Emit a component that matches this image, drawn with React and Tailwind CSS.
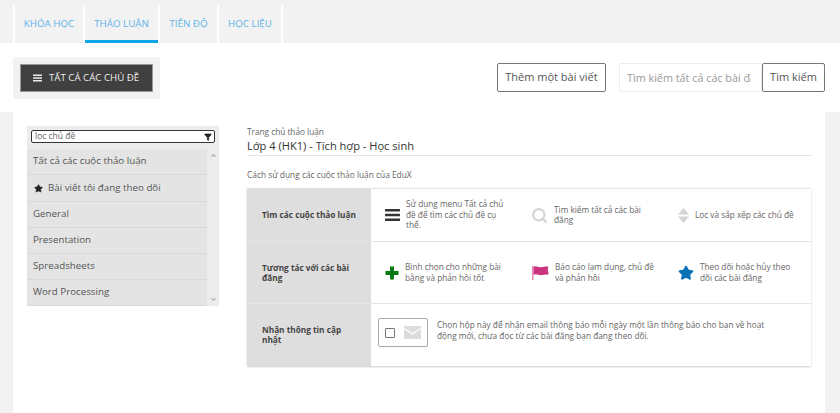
import React from 'react';
import { Star, Filter, Search, ChevronUp, ChevronDown } from 'lucide-react';

const topics = ['General', 'Presentation', 'Spreadsheets', 'Word Processing'];

function Tab({ label, active, width }) {
  return (
    <div className={`flex h-[38px] items-center justify-center border-l-2 border-white text-[9.75px] text-[#5fb3ea] ${width} ${active ? 'shadow-[inset_0_-3px_0_#0ea5e9]' : ''}`}>
      {label}
    </div>
  );
}

function BarsIcon({ width, height, color }) {
  return (
    <svg width={width} height={height} viewBox="0 0 15 12" className="shrink-0" fill={color}>
      <rect x="0" y="0" width="15" height="2.500" rx="0.5" />
      <rect x="0" y="4.700" width="15" height="2.500" rx="0.5" />
      <rect x="0" y="9.400" width="15" height="2.500" rx="0.5" />
    </svg>
  );
}

function SortIcon() {
  return (
    <svg width="11" height="15" viewBox="0 0 11 15" className="shrink-0">
      <path d="M5.500 0 11 6.500H0z M0 8.500h11L5.500 15z" fill="#d4d4d4" />
    </svg>
  );
}

function PlusIcon() {
  return (
    <svg width="14" height="14" viewBox="0 0 14 14" className="shrink-0">
      <path d="M5 .5h4V5h4.500v4H9v4.500H5V9H.5V5H5z" fill="#0a7a12" />
    </svg>
  );
}

function FlagIcon() {
  return (
    <svg width="17" height="15" viewBox="0 0 18 16" className="shrink-0">
      <path d="M0 1h1.400v15H0z" fill="#e879a8" />
      <path d="M1.500 2c3-1.600 5 .6 8 .4 3-.1 5-.9 8-.7-.8 2-1 3.500-.3 5.500.3 1 .3 2 .3 3-3-.3-5 .6-8 .6s-5-1.800-8-.3z" fill="#c9337f" />
    </svg>
  );
}

function MailIcon() {
  return (
    <svg width="17" height="13" viewBox="0 0 17 13" className="shrink-0">
      <rect width="17" height="13" rx="1" fill="#dcdcdc" />
      <path d="M.5 2.500 8.500 8l8-5.500" fill="none" stroke="#fff" strokeWidth="1.200" />
    </svg>
  );
}

function HelpItem({ icon, children, className }) {
  return (
    <div className={`flex items-center ${className}`}>
      {icon}
      <p className="text-[8.25px] leading-[10.5px] text-[#666]">{children}</p>
    </div>
  );
}

function RowLabel({ children }) {
  return (
    <div className="flex w-[124px] shrink-0 items-center bg-[#dedede] pl-[15px] text-[8.25px] font-bold leading-[10px] text-[#444]">
      <span className="block w-[95px]">{children}</span>
    </div>
  );
}

export default function App() {
  return (
    <div className="h-[413px] w-[840px] overflow-hidden bg-[#f2f2f2] font-['Open_Sans',sans-serif]">
      {/* tabs */}
      <div className="flex h-[43px] items-end pl-[13px]">
        <Tab label="KHÓA HỌC" width="w-[70px]" />
        <Tab label="THẢO LUẬN" active width="w-[75px]" />
        <Tab label="TIẾN ĐỘ" width="w-[59px]" />
        <div className="flex h-[38px] w-[66px] items-center justify-center border-x-2 border-white text-[9.75px] text-[#5fb3ea]">HỌC LIỆU</div>
      </div>

      {/* toolbar */}
      <div className="flex h-[69px] items-start bg-white pl-[13px] pr-[15px] pt-[14px]">
        <div className="bg-[#f2f2f2] px-[7px] py-[7px]">
          <button className="flex h-[28px] w-[133px] items-center gap-[7px] border border-[#999] bg-[#404040] pl-[12px] text-[9.700px] whitespace-nowrap text-[#eee]">
            <BarsIcon width={9} height={8} color="#eee" />
            TẤT CẢ CÁC CHỦ ĐỀ
          </button>
        </div>
        <div className="ml-auto mt-[6px] flex items-center">
          <button className="flex h-[29px] w-[109px] items-center justify-center rounded-[2px] border border-[#777] bg-white text-[11px] text-[#555]">Thêm một bài viết</button>
          <input
            readOnly
            placeholder="Tìm kiếm tất cả các bài đăng"
            className="ml-[13px] h-[29px] w-[143px] rounded-l-[2px] border border-[#eee] bg-white pl-[7px] pr-[10px] text-[10.800px] outline-none placeholder:text-[#999]"
          />
          <button className="flex h-[29px] w-[63px] items-center justify-center rounded-[2px] border border-[#777] bg-white text-[11px] text-[#555]">Tìm kiếm</button>
        </div>
      </div>

      {/* main */}
      <div className="mx-[13px] flex h-[301px] w-[812px] items-start bg-white pl-[14px] pt-[14px]">
        {/* topic sidebar */}
        <div className="w-[192px] shrink-0 bg-[#ececec]">
          <div className="px-[4px] pt-[4px] pb-[6px]">
            <div className="flex h-[13px] items-center justify-between rounded-[2px] border border-[#333] bg-white pl-[3px] pr-[2px] text-[8.500px] text-[#666]">
              lọc chủ đề
              <Filter size={8} fill="#222" stroke="#222" />
            </div>
          </div>
          <div className="flex">
            <div className="w-[180px]">
              <div className="flex h-[26px] items-center border-b border-[#d8d8d8] bg-[#e4e4e4] pl-[6px] text-[9.75px] text-[#555]">Tất cả các cuộc thảo luận</div>
              <div className="flex h-[27px] items-center gap-[5px] border-b border-[#d8d8d8] bg-[#e4e4e4] pl-[7px] text-[9.75px] text-[#555]">
                <Star size={9} fill="#222" stroke="#222" />
                Bài viết tôi đang theo dõi
              </div>
              {topics.map((t) => (
                <div key={t} className="flex h-[26px] items-center border-b border-[#d8d8d8] bg-[#e4e4e4] pl-[6px] text-[9.75px] text-[#555]">{t}</div>
              ))}
            </div>
            <div className="flex w-[12px] flex-col items-center justify-between py-[3px] text-[#aaa]">
              <ChevronUp size={7} strokeWidth={4} />
              <ChevronDown size={7} strokeWidth={4} />
            </div>
          </div>
        </div>

        {/* content */}
        <div className="ml-[28px] w-[564px]">
          <div className="text-[8.25px] leading-[11px] text-[#666]">Trang chủ thảo luận</div>
          <div className="border-b border-[#e5e5e5] text-[11.1px] leading-[18px] text-[#333]">Lớp 4 (HK1) - Tích hợp - Học sinh</div>
          <div className="mt-[13px] text-[8.35px] leading-[12px] text-[#666]">Cách sử dụng các cuộc thảo luận của EduX</div>
          <div className="mt-[7px] border-t border-[#e5e5e5] shadow-[0_1px_2px_rgba(0,0,0,0.2)]">
            <div className="flex h-[53px] border-b border-[#e5e5e5]">
              <RowLabel>Tìm các cuộc thảo luận</RowLabel>
              <div className="flex flex-1 items-center pl-[14px]">
                <HelpItem className="w-[146px] gap-[6px]" icon={<BarsIcon width={15} height={12} color="#333" />}>
                  <span className="block w-[102px]">Sử dụng menu Tất cả chủ đề để tìm các chủ đề cụ thể.</span>
                </HelpItem>
                <HelpItem className="w-[147px] gap-[6px]" icon={<Search size={17} strokeWidth={3} className="shrink-0 text-[#d4d4d4]" />}>
                  <span className="block w-[95px]">Tìm kiếm tất cả các bài đăng</span>
                </HelpItem>
                <HelpItem className="gap-[6px]" icon={<SortIcon />}>
                  <span className="whitespace-nowrap">Lọc và sắp xếp các chủ đề</span>
                </HelpItem>
              </div>
            </div>
            <div className="flex h-[62px] border-b border-[#e5e5e5]">
              <RowLabel>Tương tác với các bài đăng</RowLabel>
              <div className="flex flex-1 items-center pl-[14px]">
                <HelpItem className="w-[147px] gap-[6px]" icon={<PlusIcon />}>
                  <span className="block w-[102px]">Bình chọn cho những bài bằng và phản hồi tốt</span>
                </HelpItem>
                <HelpItem className="w-[146px] gap-[6px]" icon={<FlagIcon />}>
                  <span className="block w-[102px]">Báo cáo lạm dụng, chủ đề và phản hồi</span>
                </HelpItem>
                <HelpItem className="gap-[6px]" icon={<Star size={16} fill="#0a73b7" stroke="#0a73b7" className="shrink-0" />}>
                  <span className="block w-[95px]">Theo dõi hoặc hủy theo dõi các bài đăng</span>
                </HelpItem>
              </div>
            </div>
            <div className="flex h-[62px]">
              <RowLabel>Nhận thông tin cập nhật</RowLabel>
              <div className="flex flex-1 items-start pl-[7px] pt-[14px]">
                <div className="flex h-[29px] w-[50px] shrink-0 items-center gap-[9px] rounded-[2px] border border-[#aaa] pl-[6px]">
                  <span className="h-[10px] w-[10px] shrink-0 rounded-[1px] border border-[#777]" />
                  <MailIcon />
                </div>
                <p className="ml-[9px] mt-[2px] w-[335px] text-[8.300px] leading-[10.5px] text-[#666]">Chọn hộp này để nhận email thông báo mỗi ngày một lần thông báo cho bạn về hoạt động mới, chưa đọc từ các bài đăng bạn đang theo dõi.</p>
              </div>
            </div>
          </div>
        </div>
      </div>
    </div>
  );
}
